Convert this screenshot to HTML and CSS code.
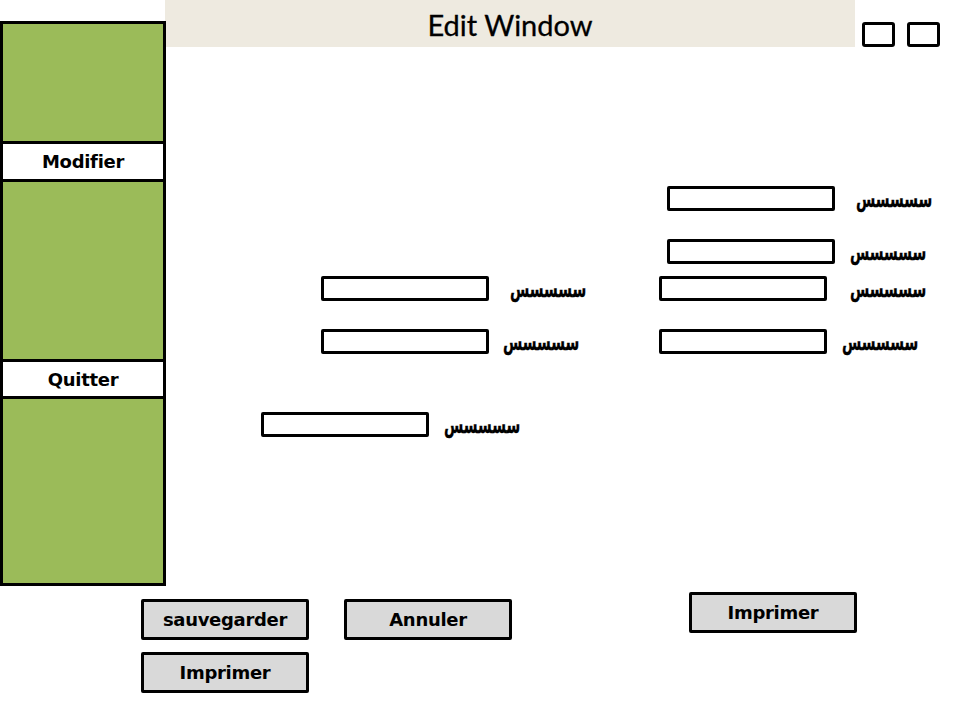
FILE: index.html
```html
<!DOCTYPE html>
<html lang="fr">
<head>
<meta charset="utf-8">
<title>Edit Window</title>
<link rel="stylesheet" href="styles.css">
</head>
<body>
<div class="screen">
  <header class="titlebar"><h1 class="title">Edit Window</h1></header>
  <div class="winctrls">
    <span class="winbtn"></span>
    <span class="winbtn"></span>
  </div>

  <nav class="sidebar">
    <div class="pane pane-top"></div>
    <div class="band band-mod">Modifier</div>
    <div class="pane pane-mid"></div>
    <div class="band band-quit">Quitter</div>
    <div class="pane pane-bot"></div>
  </nav>

  <div class="field f1"><span class="box"></span><span class="lbl" lang="ar">سسسسس</span></div>
  <div class="field f2"><span class="box"></span><span class="lbl" lang="ar">سسسسس</span></div>
  <div class="field f3"><span class="box"></span><span class="lbl" lang="ar">سسسسس</span></div>
  <div class="field f4"><span class="box"></span><span class="lbl" lang="ar">سسسسس</span></div>
  <div class="field f5"><span class="box"></span><span class="lbl" lang="ar">سسسسس</span></div>
  <div class="field f6"><span class="box"></span><span class="lbl" lang="ar">سسسسس</span></div>
  <div class="field f7"><span class="box"></span><span class="lbl" lang="ar">سسسسس</span></div>

  <button class="btn b-save">sauvegarder</button>
  <button class="btn b-cancel">Annuler</button>
  <button class="btn b-print">Imprimer</button>
  <button class="btn b-print2">Imprimer</button>
</div>
</body>
</html>
```

FILE: styles.css
```css
html, body {
  margin: 0;
  padding: 0;
  background: #fff;
}

.screen {
  position: relative;
  width: 960px;
  height: 720px;
  overflow: hidden;
  font-family: "DejaVu Sans", sans-serif;
  color: #000;
}

.titlebar {
  position: absolute;
  left: 165px;
  top: 0;
  width: 690px;
  height: 47px;
  background: #eeeae0;
  display: flex;
  align-items: center;
  justify-content: center;
}

.title {
  margin: 0;
  font-family: "Lato", "Open Sans", sans-serif;
  font-weight: 400;
  font-size: 29px;
  line-height: 1;
  padding-top: 1px;
  -webkit-text-stroke: 0.3px #000;
}

.winctrls {
  position: absolute;
  left: 862px;
  top: 22px;
  display: flex;
  gap: 12px;
}

.winbtn {
  display: block;
  width: 27px;
  height: 19px;
  border: 3px solid #000;
  border-radius: 3px;
  background: #fff;
}

.sidebar {
  position: absolute;
  left: 0;
  top: 21px;
  width: 160px;
  height: 559px;
  border: 3px solid #000;
  display: flex;
  flex-direction: column;
  background: #9bbb59;
}

.pane {
  background: #9bbb59;
}
.pane-top { height: 117px; }
.pane-mid { height: 177px; }
.pane-bot { flex: 1; }

.band {
  background: #fff;
  border-top: 3px solid #000;
  border-bottom: 3px solid #000;
  display: flex;
  align-items: center;
  justify-content: center;
  font-weight: 700;
  font-size: 18px;
  letter-spacing: -0.3px;
}
.band-mod { height: 35px; }
.band-quit { height: 34px; }

.field {
  position: absolute;
  display: flex;
  align-items: center;
}

.box {
  display: block;
  width: 162px;
  height: 19px;
  border: 3px solid #000;
  border-radius: 2px;
  background: #fff;
}

.lbl {
  display: inline-block;
  font-family: "DejaVu Sans", sans-serif;
  font-weight: 700;
  font-size: 14px;
  line-height: 1;
  direction: rtl;
  transform: scale(1, 1.6);
  transform-origin: center center;
  -webkit-text-stroke: 0.2px #000;
}

.f1 { left: 667px; top: 186px; }
.f1 .lbl { margin-left: 21px; }
.f2 { left: 667px; top: 239px; }
.f2 .lbl { margin-left: 15px; }
.f3 { left: 659px; top: 276px; }
.f3 .lbl { margin-left: 23px; }
.f4 { left: 659px; top: 329px; }
.f4 .lbl { margin-left: 15px; }
.f5 { left: 321px; top: 276px; }
.f5 .lbl { margin-left: 21px; }
.f6 { left: 321px; top: 329px; }
.f6 .lbl { margin-left: 14px; }
.f7 { left: 261px; top: 412px; }
.f7 .lbl { margin-left: 15px; }

.btn {
  position: absolute;
  width: 168px;
  height: 41px;
  margin: 0;
  padding: 0;
  border: 3px solid #000;
  border-radius: 2px;
  background: #d9d9d9;
  font-family: "DejaVu Sans", sans-serif;
  font-weight: 700;
  font-size: 18px;
  letter-spacing: -0.3px;
  color: #000;
}

.b-save { left: 141px; top: 599px; }
.b-cancel { left: 344px; top: 599px; }
.b-print { left: 141px; top: 652px; }
.b-print2 { left: 689px; top: 592px; }
```
